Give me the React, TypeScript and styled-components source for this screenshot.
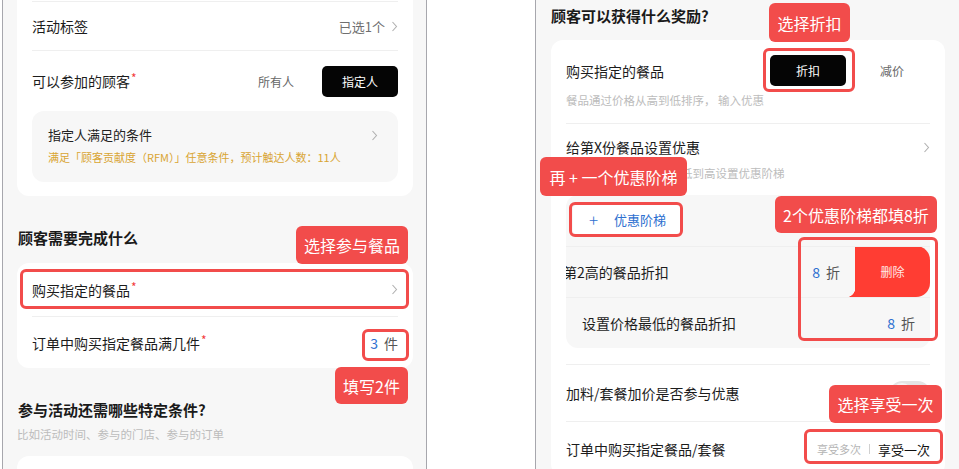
import React from "react";
import styled, { createGlobalStyle } from "styled-components";

const GlobalStyle = createGlobalStyle`
  html, body {
    margin: 0;
    padding: 0;
    background: #ffffff;
  }
  body {
    font-family: "Noto Sans CJK SC", "Noto Sans", sans-serif;
    color: #1c1c1c;
  }
`;

const RED = "#f24c4b";

// 页面骨架
const Stage = styled.div`
  position: relative;
  width: 959px;
  height: 469px;
  overflow: hidden;
  display: flex;
  padding-left: 2px;
  box-sizing: border-box;
  background: #ffffff;
`;

const Phone = styled.div<{ $width: number; $gap?: number; $right?: boolean }>`
  width: ${(p) => p.$width}px;
  margin-left: ${(p) => p.$gap ?? 0}px;
  height: 100%;
  flex-shrink: 0;
  box-sizing: border-box;
  background: #f7f7f7;
  border-left: 1px solid #a7a7ad;
  border-right: ${(p) => (p.$right ? "none" : "1px solid #a7a7ad")};
  padding: ${(p) => (p.$right ? "0 14px 0 15px" : "0 13px 0 14px")};
  display: flex;
  flex-direction: column;
`;

const Card = styled.div<{ $flatTop?: boolean; $pb?: number }>`
  background: #ffffff;
  border-radius: ${(p) => (p.$flatTop ? "0 0 12px 12px" : "12px")};
  padding: ${(p) => (p.$flatTop ? "1px" : "0")} 15px ${(p) => p.$pb ?? 0}px;
  display: flex;
  flex-direction: column;
  flex-shrink: 0;
`;

const Divider = styled.div<{ $mt?: number }>`
  height: 1px;
  background: #efefef;
  margin-top: ${(p) => p.$mt ?? 0}px;
  flex-shrink: 0;
`;

const Row = styled.div<{ $h: number }>`
  height: ${(p) => p.$h}px;
  display: flex;
  align-items: center;
  justify-content: space-between;
  flex-shrink: 0;
`;

const Label = styled.span`
  font-size: 14px;
  line-height: 20px;
  color: #1c1c1c;
  white-space: nowrap;
`;

const Star = styled.sup`
  color: #f23c3c;
  font-size: 12px;
  line-height: 0;
  vertical-align: 4px;
  margin-left: 1px;
`;

const Value = styled.span`
  display: flex;
  align-items: center;
  gap: 6px;
  font-size: 13px;
  color: #6f6f6f;
`;

const Num = styled.span`
  color: #2d6fd0;
  font-size: 14px;
`;

const Unit = styled.span`
  color: #555;
  font-size: 14px;
`;

const SectionTitle = styled.h2<{ $mt: number; $mb: number }>`
  margin: ${(p) => p.$mt}px 0 ${(p) => p.$mb}px 1px;
  font-size: 15px;
  line-height: 22px;
  font-weight: 600;
  color: #1a1a1a;
  flex-shrink: 0;
`;

const Hint = styled.p<{ $mt?: number; $mb?: number; $pl?: number }>`
  margin: ${(p) => p.$mt ?? 0}px 0 ${(p) => p.$mb ?? 0}px ${(p) => p.$pl ?? 0}px;
  font-size: 11.5px;
  line-height: 16px;
  color: #bcbcbc;
  white-space: nowrap;
  flex-shrink: 0;
`;

// 分段选择
const Segment = styled.div`
  display: flex;
  gap: 8px;
`;

const SegOption = styled.div<{ $active?: boolean }>`
  width: 76px;
  height: 31px;
  border-radius: 5px;
  display: flex;
  align-items: center;
  justify-content: center;
  font-size: 12px;
  color: ${(p) => (p.$active ? "#ffffff" : "#666")};
  background: ${(p) => (p.$active ? "#050505" : "transparent")};
`;

const ConditionBox = styled.div`
  height: 71px;
  box-sizing: border-box;
  background: #f7f7f7;
  border-radius: 12px;
  padding: 14px 20px 0 16px;
  display: flex;
  flex-direction: column;
`;

const ConditionHead = styled.div`
  display: flex;
  justify-content: space-between;
  align-items: center;
  font-size: 13px;
  line-height: 20px;
  color: #222;
`;

const ConditionNote = styled.div`
  margin-top: 4px;
  font-size: 11px;
  line-height: 16px;
  color: #d9a533;
  white-space: nowrap;
`;

// 优惠阶梯
const LadderBox = styled.div`
  margin-top: 14px;
  background: #f7f7f7;
  border-radius: 12px;
  overflow: hidden;
  display: flex;
  flex-direction: column;
  flex-shrink: 0;
`;

const AddButton = styled.div`
  margin: 10px 0 12px 7px;
  width: 108px;
  height: 29px;
  box-sizing: border-box;
  background: #ffffff;
  border-radius: 4px;
  display: flex;
  align-items: center;
  padding-left: 16px;
  gap: 16px;
  color: #2d6fd0;
  font-size: 13px;
`;

const Plus = styled.span`
  font-size: 17px;
  line-height: 1;
  font-weight: 300;
`;

const LadderRow = styled.div<{ $h: number }>`
  position: relative;
  height: ${(p) => p.$h}px;
  overflow: hidden;
  flex-shrink: 0;
`;

const LadderContent = styled.div<{ $shift?: number }>`
  height: 100%;
  display: flex;
  align-items: center;
  justify-content: space-between;
  padding: 0 15px 0 16px;
  transform: translateX(${(p) => -(p.$shift ?? 0)}px);
`;

const DeleteAction = styled.div`
  position: absolute;
  top: -1px;
  right: 0;
  bottom: 0;
  width: 75px;
  background: #ff3d33;
  border-radius: 0 14px 14px 0;
  display: flex;
  align-items: center;
  justify-content: center;
  color: #ffe9e7;
  font-size: 12px;

  &::before {
    content: "";
    position: absolute;
    left: -9px;
    bottom: 0;
    width: 9px;
    height: 9px;
    background: radial-gradient(circle at 0 0, transparent 9px, #ff3d33 9.5px);
  }
`;

const Toggle = styled.div`
  width: 40px;
  height: 24px;
  border-radius: 12px;
  background: #e4e4e4;
  position: relative;

  &::after {
    content: "";
    position: absolute;
    left: 2px;
    top: 2px;
    width: 20px;
    height: 20px;
    border-radius: 50%;
    background: #f4f4f4;
  }
`;

const UseSwitch = styled.div`
  display: flex;
  align-items: center;
  gap: 8px;
`;

const UseOption = styled.span<{ $active?: boolean }>`
  font-size: ${(p) => (p.$active ? 13 : 11)}px;
  color: ${(p) => (p.$active ? "#111" : "#b5b5b5")};
`;

const Bar = styled.span`
  width: 1px;
  height: 10px;
  background: #d0d0d0;
`;

// 标注
const Callout = styled.div<{ $x: number; $y: number; $w: number; $h: number }>`
  position: absolute;
  left: ${(p) => p.$x}px;
  top: ${(p) => p.$y}px;
  width: ${(p) => p.$w}px;
  height: ${(p) => p.$h}px;
  background: ${RED};
  border-radius: 6px;
  color: #ffffff;
  font-size: 16px;
  display: flex;
  align-items: center;
  justify-content: center;
  white-space: nowrap;
  z-index: 3;
`;

const Outline = styled.div<{ $x: number; $y: number; $w: number; $h: number }>`
  position: absolute;
  left: ${(p) => p.$x}px;
  top: ${(p) => p.$y}px;
  width: ${(p) => p.$w}px;
  height: ${(p) => p.$h}px;
  box-sizing: border-box;
  border: 3px solid ${RED};
  border-radius: 6px;
  z-index: 2;
`;

const Chevron = () => (
  <svg width="7" height="11" viewBox="0 0 7 11">
    <polyline
      points="1.5,1 5.5,5.5 1.5,10"
      fill="none"
      stroke="#b0b0b0"
      strokeWidth="1.1"
    />
  </svg>
);

export default function App() {
  return (
    <>
      <GlobalStyle />
      <Stage>
        {/* 左侧截图 */}
        <Phone $width={425}>
          <Card $flatTop $pb={14}>
            <Divider />
            <Row $h={48}>
              <Label>活动标签</Label>
              <Value>
                已选1个 <Chevron />
              </Value>
            </Row>
            <Divider />
            <Row $h={60}>
              <Label>
                可以参加的顾客<Star>*</Star>
              </Label>
              <Segment>
                <SegOption>所有人</SegOption>
                <SegOption $active>指定人</SegOption>
              </Segment>
            </Row>
            <ConditionBox>
              <ConditionHead>
                指定人满足的条件 <Chevron />
              </ConditionHead>
              <ConditionNote>
                满足「顾客贡献度（RFM）」任意条件，预计触达人数：11人
              </ConditionNote>
            </ConditionBox>
          </Card>

          <SectionTitle $mt={31} $mb={14}>
            顾客需要完成什么
          </SectionTitle>
          <Card>
            <Row $h={53}>
              <Label>
                购买指定的餐品<Star>*</Star>
              </Label>
              <Chevron />
            </Row>
            <Divider />
            <Row $h={51}>
              <Label>
                订单中购买指定餐品满几件<Star>*</Star>
              </Label>
              <Value>
                <Num>3</Num>
                <Unit>件</Unit>
              </Value>
            </Row>
          </Card>

          <SectionTitle $mt={31} $mb={0}>
            参与活动还需哪些特定条件?
          </SectionTitle>
          <Hint $mt={5} $mb={14}>
            比如活动时间、参与的门店、参与的订单
          </Hint>
          <Card style={{ height: 60 }} />
        </Phone>

        {/* 右侧截图 */}
        <Phone $width={424} $gap={108} $right>
          <SectionTitle $mt={5} $mb={13} style={{ marginLeft: 0 }}>
            顾客可以获得什么奖励?
          </SectionTitle>
          <Card>
            <Row $h={31} style={{ marginTop: 15 }}>
              <Label>购买指定的餐品</Label>
              <Segment>
                <SegOption $active>折扣</SegOption>
                <SegOption>减价</SegOption>
              </Segment>
            </Row>
            <Hint $mt={6} $mb={15}>
              餐品通过价格从高到低排序， 输入优惠
            </Hint>
            <Divider />
            <Row $h={20} style={{ marginTop: 13 }}>
              <Label>给第X份餐品设置优惠</Label>
              <Chevron />
            </Row>
            <Hint $mt={8}>按照餐品价格排序，从低到高设置优惠阶梯</Hint>

            <LadderBox>
              <AddButton>
                <Plus>+</Plus>
                优惠阶梯
              </AddButton>
              <Divider />
              <LadderRow $h={50}>
                <LadderContent $shift={75}>
                  <Label>设置价格第2高的餐品折扣</Label>
                  <Value>
                    <Num>8</Num>
                    <Unit>折</Unit>
                  </Value>
                </LadderContent>
                <DeleteAction>删除</DeleteAction>
              </LadderRow>
              <Divider />
              <LadderRow $h={50}>
                <LadderContent>
                  <Label>设置价格最低的餐品折扣</Label>
                  <Value>
                    <Num>8</Num>
                    <Unit>折</Unit>
                  </Value>
                </LadderContent>
              </LadderRow>
            </LadderBox>

            <Divider $mt={16} />
            <Row $h={56}>
              <Label>加料/套餐加价是否参与优惠</Label>
              <Toggle />
            </Row>
            <Divider />
            <Row $h={54}>
              <Label>订单中购买指定餐品/套餐</Label>
              <UseSwitch>
                <UseOption>享受多次</UseOption>
                <Bar />
                <UseOption $active>享受一次</UseOption>
              </UseSwitch>
            </Row>
          </Card>
        </Phone>

        {/* 标注层 */}
        <Callout $x={296} $y={226} $w={112} $h={38}>选择参与餐品</Callout>
        <Outline $x={20} $y={269} $w={389} $h={40} />
        <Outline $x={362} $y={329} $w={47} $h={32} />
        <Callout $x={335} $y={367} $w={73} $h={37}>填写2件</Callout>

        <Callout $x={769} $y={3} $w={81} $h={39}>选择折扣</Callout>
        <Outline $x={763} $y={48} $w={92} $h={44} />
        <Callout $x={540} $y={157} $w={147} $h={39}>再 + 一个优惠阶梯</Callout>
        <Outline $x={569} $y={202} $w={114} $h={35} />
        <Callout $x={775} $y={196} $w={162} $h={37}>2个优惠阶梯都填8折</Callout>
        <Outline $x={798} $y={237} $w={140} $h={104} />
        <Callout $x={829} $y={385} $w={113} $h={38}>选择享受一次</Callout>
        <Outline $x={804} $y={429} $w={139} $h={35} />
      </Stage>
    </>
  );
}
